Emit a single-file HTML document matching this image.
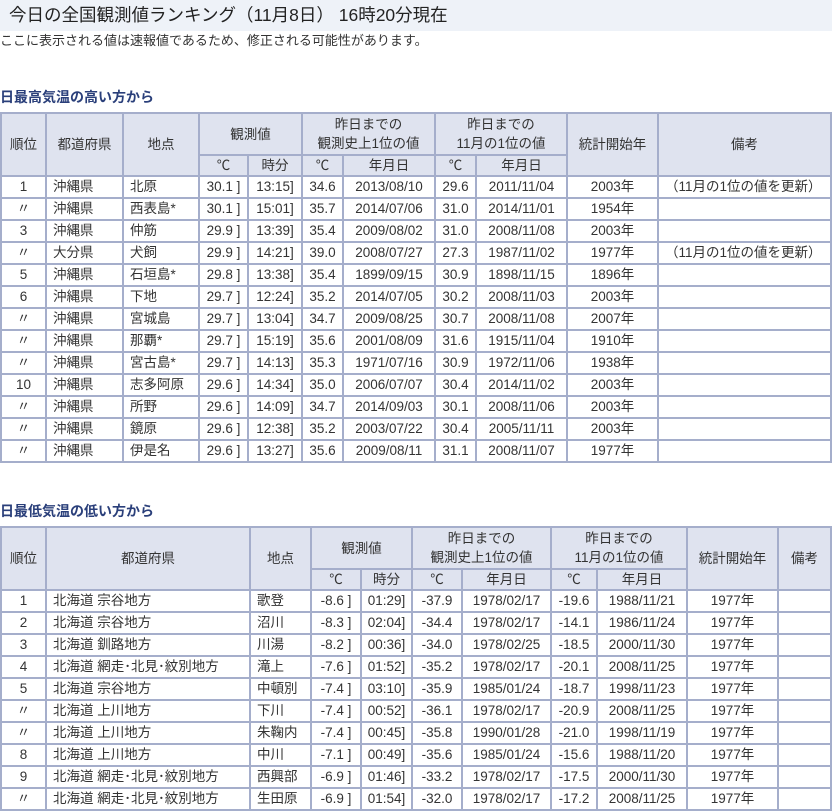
<!DOCTYPE html>
<html><head><meta charset="utf-8"><style>
body{margin:0;background:#fff;font-family:"Liberation Sans","Noto Sans CJK JP",sans-serif;color:#333;width:832px;height:811px;overflow:hidden;position:relative}
.title{position:absolute;left:0;top:0;width:832px;height:31px;background:#eef2f8;font-size:17.5px;line-height:31px;padding-left:9px;box-sizing:border-box;color:#222}
.sub{position:absolute;left:0;top:32px;font-size:13px;line-height:18px}
.h{position:absolute;left:0;font-size:14px;font-weight:bold;color:#2a3f7a;line-height:18px}
table{position:absolute;left:0;border-collapse:collapse;table-layout:fixed;font-size:13.5px}
td,th{border:2px solid #a5aecb;padding:0;white-space:nowrap;overflow:hidden;font-weight:normal}
th{background:#dfe3ef;text-align:center}
tr.r1 th{height:40px;line-height:19px}
tr.r2 th{height:19px;line-height:19px}
td{height:20px;line-height:20px;text-align:center}
td.l{text-align:left;padding-left:6px}
</style></head><body>
<div class="title">今日の全国観測値ランキング（11月8日） 16時20分現在</div>
<div class="sub">ここに表示される値は速報値であるため、修正される可能性があります。</div>
<div class="h" style="top:88px">日最高気温の高い方から</div>
<table style="top:112px;width:830px">
<colgroup><col style="width:45px"><col style="width:77px"><col style="width:76px"><col style="width:49px"><col style="width:54px"><col style="width:41px"><col style="width:92px"><col style="width:41px"><col style="width:91px"><col style="width:91px"><col style="width:173px"></colgroup>
<tr class="r1"><th rowspan="2">順位</th><th rowspan="2">都道府県</th><th rowspan="2">地点</th><th colspan="2">観測値</th><th colspan="2">昨日までの<br>観測史上1位の値</th><th colspan="2">昨日までの<br>11月の1位の値</th><th rowspan="2">統計開始年</th><th rowspan="2">備考</th></tr>
<tr class="r2"><th>℃</th><th>時分</th><th>℃</th><th>年月日</th><th>℃</th><th>年月日</th></tr>
<tr><td>1</td><td class="l">沖縄県</td><td class="l">北原</td><td>30.1 ]</td><td>13:15]</td><td>34.6</td><td>2013/08/10</td><td>29.6</td><td>2011/11/04</td><td>2003年</td><td class="l">（11月の1位の値を更新）</td></tr>
<tr><td>〃</td><td class="l">沖縄県</td><td class="l">西表島*</td><td>30.1 ]</td><td>15:01]</td><td>35.7</td><td>2014/07/06</td><td>31.0</td><td>2014/11/01</td><td>1954年</td><td></td></tr>
<tr><td>3</td><td class="l">沖縄県</td><td class="l">仲筋</td><td>29.9 ]</td><td>13:39]</td><td>35.4</td><td>2009/08/02</td><td>31.0</td><td>2008/11/08</td><td>2003年</td><td></td></tr>
<tr><td>〃</td><td class="l">大分県</td><td class="l">犬飼</td><td>29.9 ]</td><td>14:21]</td><td>39.0</td><td>2008/07/27</td><td>27.3</td><td>1987/11/02</td><td>1977年</td><td class="l">（11月の1位の値を更新）</td></tr>
<tr><td>5</td><td class="l">沖縄県</td><td class="l">石垣島*</td><td>29.8 ]</td><td>13:38]</td><td>35.4</td><td>1899/09/15</td><td>30.9</td><td>1898/11/15</td><td>1896年</td><td></td></tr>
<tr><td>6</td><td class="l">沖縄県</td><td class="l">下地</td><td>29.7 ]</td><td>12:24]</td><td>35.2</td><td>2014/07/05</td><td>30.2</td><td>2008/11/03</td><td>2003年</td><td></td></tr>
<tr><td>〃</td><td class="l">沖縄県</td><td class="l">宮城島</td><td>29.7 ]</td><td>13:04]</td><td>34.7</td><td>2009/08/25</td><td>30.7</td><td>2008/11/08</td><td>2007年</td><td></td></tr>
<tr><td>〃</td><td class="l">沖縄県</td><td class="l">那覇*</td><td>29.7 ]</td><td>15:19]</td><td>35.6</td><td>2001/08/09</td><td>31.6</td><td>1915/11/04</td><td>1910年</td><td></td></tr>
<tr><td>〃</td><td class="l">沖縄県</td><td class="l">宮古島*</td><td>29.7 ]</td><td>14:13]</td><td>35.3</td><td>1971/07/16</td><td>30.9</td><td>1972/11/06</td><td>1938年</td><td></td></tr>
<tr><td>10</td><td class="l">沖縄県</td><td class="l">志多阿原</td><td>29.6 ]</td><td>14:34]</td><td>35.0</td><td>2006/07/07</td><td>30.4</td><td>2014/11/02</td><td>2003年</td><td></td></tr>
<tr><td>〃</td><td class="l">沖縄県</td><td class="l">所野</td><td>29.6 ]</td><td>14:09]</td><td>34.7</td><td>2014/09/03</td><td>30.1</td><td>2008/11/06</td><td>2003年</td><td></td></tr>
<tr><td>〃</td><td class="l">沖縄県</td><td class="l">鏡原</td><td>29.6 ]</td><td>12:38]</td><td>35.2</td><td>2003/07/22</td><td>30.4</td><td>2005/11/11</td><td>2003年</td><td></td></tr>
<tr><td>〃</td><td class="l">沖縄県</td><td class="l">伊是名</td><td>29.6 ]</td><td>13:27]</td><td>35.6</td><td>2009/08/11</td><td>31.1</td><td>2008/11/07</td><td>1977年</td><td></td></tr>
</table>
<div class="h" style="top:502px">日最低気温の低い方から</div>
<table style="top:526px;width:830px">
<colgroup><col style="width:45px"><col style="width:204px"><col style="width:61px"><col style="width:50px"><col style="width:51px"><col style="width:50px"><col style="width:89px"><col style="width:46px"><col style="width:90px"><col style="width:91px"><col style="width:53px"></colgroup>
<tr class="r1"><th rowspan="2">順位</th><th rowspan="2">都道府県</th><th rowspan="2">地点</th><th colspan="2">観測値</th><th colspan="2">昨日までの<br>観測史上1位の値</th><th colspan="2">昨日までの<br>11月の1位の値</th><th rowspan="2">統計開始年</th><th rowspan="2">備考</th></tr>
<tr class="r2"><th>℃</th><th>時分</th><th>℃</th><th>年月日</th><th>℃</th><th>年月日</th></tr>
<tr><td>1</td><td class="l">北海道 宗谷地方</td><td class="l">歌登</td><td>-8.6 ]</td><td>01:29]</td><td>-37.9</td><td>1978/02/17</td><td>-19.6</td><td>1988/11/21</td><td>1977年</td><td></td></tr>
<tr><td>2</td><td class="l">北海道 宗谷地方</td><td class="l">沼川</td><td>-8.3 ]</td><td>02:04]</td><td>-34.4</td><td>1978/02/17</td><td>-14.1</td><td>1986/11/24</td><td>1977年</td><td></td></tr>
<tr><td>3</td><td class="l">北海道 釧路地方</td><td class="l">川湯</td><td>-8.2 ]</td><td>00:36]</td><td>-34.0</td><td>1978/02/25</td><td>-18.5</td><td>2000/11/30</td><td>1977年</td><td></td></tr>
<tr><td>4</td><td class="l">北海道 網走･北見･紋別地方</td><td class="l">滝上</td><td>-7.6 ]</td><td>01:52]</td><td>-35.2</td><td>1978/02/17</td><td>-20.1</td><td>2008/11/25</td><td>1977年</td><td></td></tr>
<tr><td>5</td><td class="l">北海道 宗谷地方</td><td class="l">中頓別</td><td>-7.4 ]</td><td>03:10]</td><td>-35.9</td><td>1985/01/24</td><td>-18.7</td><td>1998/11/23</td><td>1977年</td><td></td></tr>
<tr><td>〃</td><td class="l">北海道 上川地方</td><td class="l">下川</td><td>-7.4 ]</td><td>00:52]</td><td>-36.1</td><td>1978/02/17</td><td>-20.9</td><td>2008/11/25</td><td>1977年</td><td></td></tr>
<tr><td>〃</td><td class="l">北海道 上川地方</td><td class="l">朱鞠内</td><td>-7.4 ]</td><td>00:45]</td><td>-35.8</td><td>1990/01/28</td><td>-21.0</td><td>1998/11/19</td><td>1977年</td><td></td></tr>
<tr><td>8</td><td class="l">北海道 上川地方</td><td class="l">中川</td><td>-7.1 ]</td><td>00:49]</td><td>-35.6</td><td>1985/01/24</td><td>-15.6</td><td>1988/11/20</td><td>1977年</td><td></td></tr>
<tr><td>9</td><td class="l">北海道 網走･北見･紋別地方</td><td class="l">西興部</td><td>-6.9 ]</td><td>01:46]</td><td>-33.2</td><td>1978/02/17</td><td>-17.5</td><td>2000/11/30</td><td>1977年</td><td></td></tr>
<tr><td>〃</td><td class="l">北海道 網走･北見･紋別地方</td><td class="l">生田原</td><td>-6.9 ]</td><td>01:54]</td><td>-32.0</td><td>1978/02/17</td><td>-17.2</td><td>2008/11/25</td><td>1977年</td><td></td></tr>
</table>
</body></html>
